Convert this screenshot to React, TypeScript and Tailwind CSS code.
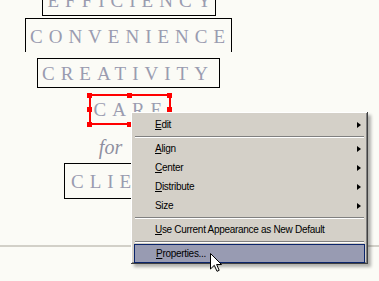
import React from "react";

const serif = { fontFamily: '"Liberation Serif", "Times New Roman", serif' };

const Word: React.FC<{ text: string; className: string }> = ({ text, className }) => (
  <div className={`flex items-center text-[19px] leading-none tracking-[6px] text-[#9a9cb0] ${className}`} style={serif}>
    {text}
  </div>
);

const Handle: React.FC<{ className: string }> = ({ className }) => (
  <span className={`absolute w-[5px] h-[5px] bg-[#ff0000] ${className}`} />
);

type Item = { label: string; key: number; arrow?: boolean; active?: boolean } | { sep: true };

const items: Item[] = [
  { label: "Edit", key: 0, arrow: true },
  { sep: true },
  { label: "Align", key: 0, arrow: true },
  { label: "Center", key: 0, arrow: true },
  { label: "Distribute", key: 0, arrow: true },
  { label: "Size", key: -1, arrow: true },
  { sep: true },
  { label: "Use Current Appearance as New Default", key: 0 },
  { sep: true },
  { label: "Properties...", key: 0, active: true },
];

const ContextMenu: React.FC = () => (
  <div
    className="absolute left-[131px] top-[112px] w-[237px] bg-[#d4d0c8] pt-[3px] pb-[1px] px-[3px] shadow-[inset_-1px_-1px_0_#404040,inset_1px_1px_0_#ffffff,inset_-2px_-2px_0_#808080,3px_3px_3px_rgba(0,0,0,0.3)]"
    style={{ fontFamily: '"Liberation Sans", Arial, sans-serif' }}
  >
    {items.map((it, i) =>
      "sep" in it ? (
        <div key={i} className="h-[5px] pt-[2px] px-[1px]">
          <div className="h-[1px] bg-[#808080]" />
          <div className="h-[1px] bg-white" />
        </div>
      ) : (
        <div
          key={i}
          className={`flex items-center h-[19px] pl-[21px] pr-[4px] text-[10px] tracking-[-0.3px] text-black ${
            it.active ? "bg-[#989bb2] border border-[#0a246a] pl-[20px]" : ""
          }`}
        >
          <span className="flex-1">
            {it.key === 0 ? (
              <>
                <span className="underline underline-offset-1">{it.label[0]}</span>
                {it.label.slice(1)}
              </>
            ) : (
              it.label
            )}
          </span>
          {it.arrow && <span className="w-0 h-0 border-y-[3.5px] border-y-transparent border-l-[4px] border-l-black" />}
        </div>
      )
    )}
  </div>
);

const Cursor: React.FC = () => (
  <svg className="absolute left-[210px] top-[253px]" width="12" height="19" viewBox="0 0 12 19">
    <path d="M0.5 0.5 L0.5 16 L4.3 12.3 L7 18.3 L9.2 17.3 L6.6 11.5 L11.5 11.5 Z" fill="#ffffff" stroke="#000000" strokeWidth="1" />
  </svg>
);

export default function App() {
  return (
    <div className="relative w-[379px] h-[281px] overflow-hidden bg-[#fbfbf6]">
      <div className="h-[262px] border-b-2 border-[#d2d0c8]">
        <div className="w-[257px] flex flex-col items-center -mt-[15px]">
          <Word text="EFFICIENCY" className="w-[174px] h-[31px] border border-black pl-[5px]" />
          <Word text="CONVENIENCE" className="mt-[2px] w-[207px] h-[34px] border-t border-x border-black pl-[4px] pt-[2px]" />
          <Word text="CREATIVITY" className="mt-[6px] w-[183px] h-[30px] border border-black pl-[4px]" />
          <div className="relative mt-[6px] ml-[2px]">
            <Word text="CARE" className="w-[82px] h-[31px] border-2 border-[#ff0000] pl-[3px]" />
            <Handle className="-left-[1.5px] -top-[1.5px]" />
            <Handle className="left-[38.5px] -top-[1.5px]" />
            <Handle className="-right-[1.5px] -top-[1.5px]" />
            <Handle className="-left-[1.5px] top-[13px]" />
            <Handle className="-right-[1.5px] top-[13px]" />
            <Handle className="-left-[1.5px] -bottom-[1.5px]" />
            <Handle className="left-[38.5px] -bottom-[1.5px]" />
            <Handle className="-right-[1.5px] -bottom-[1.5px]" />
          </div>
          <div className="mt-[12px] mr-[36px] text-[20px] leading-none italic text-[#8e8fa0]" style={serif}>
            for
          </div>
          <Word text="CLIENTS" className="mt-[6px] w-[129px] h-[36px] border border-black pl-[6px]" />
        </div>
      </div>
      <ContextMenu />
      <Cursor />
    </div>
  );
}
